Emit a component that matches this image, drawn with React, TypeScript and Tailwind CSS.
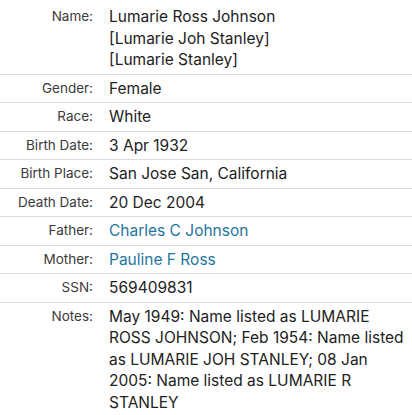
const rows: { label: string; value: React.ReactNode; link?: boolean }[] = [
  {
    label: 'Name',
    value: (
      <>
        Lumarie Ross Johnson
        <br />
        [Lumarie Joh Stanley]
        <br />
        [Lumarie Stanley]
      </>
    ),
  },
  { label: 'Gender', value: 'Female' },
  { label: 'Race', value: 'White' },
  { label: 'Birth Date', value: '3 Apr 1932' },
  { label: 'Birth Place', value: 'San Jose San, California' },
  { label: 'Death Date', value: '20 Dec 2004' },
  { label: 'Father', value: 'Charles C Johnson', link: true },
  { label: 'Mother', value: 'Pauline F Ross', link: true },
  { label: 'SSN', value: '569409831' },
  {
    label: 'Notes',
    value:
      'May 1949: Name listed as LUMARIE ROSS JOHNSON; Feb 1954: Name listed as LUMARIE JOH STANLEY; 08 Jan 2005: Name listed as LUMARIE R STANLEY',
  },
];

export default function App() {
  return (
    <div className="w-[412px] h-[415px] overflow-hidden bg-white pt-[3px] font-['Inter',sans-serif]">
      {rows.map((r, i) => (
        <div
          key={r.label}
          className={`flex py-[3px] ${i < rows.length - 1 ? 'border-b border-[#dcdcdc]' : ''}`}
        >
          <div className="w-[93px] shrink-0 text-right text-[13.5px] leading-[21.5px] text-[#3a3a3a]">
            {r.label}:
          </div>
          <div
            className={`pl-[16px] pr-[6px] text-[15.5px] leading-[21.5px] ${
              r.link ? 'text-[#1f74a0]' : 'text-[#222]'
            }`}
          >
            {r.value}
          </div>
        </div>
      ))}
    </div>
  );
}
